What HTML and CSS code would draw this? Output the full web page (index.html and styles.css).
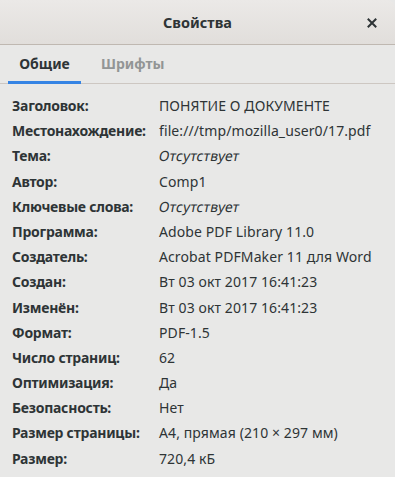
FILE: index.html
```html
<!DOCTYPE html>
<html lang="ru">
<head>
<meta charset="utf-8">
<title>Свойства</title>
<link rel="stylesheet" href="styles.css">
</head>
<body>
<div class="window">
  <header class="titlebar">
    <div class="title">Свойства</div>
    <button class="close" aria-label="Закрыть">
      <svg width="10" height="10" viewBox="0 0 10 10"><path d="M1.5 1.5 L8.5 8.5 M8.5 1.5 L1.5 8.5" stroke="#2e3436" stroke-width="2" stroke-linecap="square"/></svg>
    </button>
  </header>
  <nav class="tabs">
    <div class="tab active">Общие</div>
    <div class="tab">Шрифты</div>
  </nav>
  <dl class="props">
    <dt>Заголовок:</dt><dd>ПОНЯТИЕ О ДОКУМЕНТЕ</dd>
    <dt>Местонахождение:</dt><dd>file:///tmp/mozilla_user0/17.pdf</dd>
    <dt>Тема:</dt><dd><span class="none">Отсутствует</span></dd>
    <dt>Автор:</dt><dd>Comp1</dd>
    <dt>Ключевые слова:</dt><dd><span class="none">Отсутствует</span></dd>
    <dt>Программа:</dt><dd>Adobe PDF Library 11.0</dd>
    <dt>Создатель:</dt><dd>Acrobat PDFMaker 11 для Word</dd>
    <dt>Создан:</dt><dd>Вт 03 окт 2017 16:41:23</dd>
    <dt>Изменён:</dt><dd>Вт 03 окт 2017 16:41:23</dd>
    <dt>Формат:</dt><dd>PDF-1.5</dd>
    <dt>Число страниц:</dt><dd>62</dd>
    <dt>Оптимизация:</dt><dd>Да</dd>
    <dt>Безопасность:</dt><dd>Нет</dd>
    <dt>Размер страницы:</dt><dd>A4, прямая (210 × 297 мм)</dd>
    <dt>Размер:</dt><dd>720,4 кБ</dd>
  </dl>
</div>
</body>
</html>
```
FILE: styles.css
```css
html, body {
  margin: 0;
  padding: 0;
  background: #e8e8e7;
}
body {
  font-family: "Noto Sans", "Open Sans", sans-serif;
  font-size: 14px;
  color: #2e3436;
}
.window {
  width: 395px;
  height: 477px;
  background: #e8e8e7;
  border-top-right-radius: 8px;
  overflow: hidden;
}
.titlebar {
  height: 45px;
  box-sizing: border-box;
  border-bottom: 1px solid #bfb8b1;
  background: linear-gradient(to bottom, #ebe9e7, #e1dedb);
  display: flex;
  align-items: center;
  justify-content: center;
  position: relative;
}
.title {
  font-weight: bold;
  font-size: 14.5px;
}
.close {
  position: absolute;
  right: 17px;
  top: 17px;
  width: 12px;
  height: 12px;
  padding: 0;
  border: 0;
  background: none;
  display: flex;
  align-items: center;
  justify-content: center;
}
.tabs {
  height: 39px;
  box-sizing: border-box;
  border-bottom: 1px solid #cdc7c2;
  display: flex;
  padding-left: 8px;
}
.tab {
  padding: 0 12px;
  display: flex;
  align-items: center;
  font-weight: bold;
  color: #929595;
  border-bottom: 3px solid transparent;
  margin-bottom: -1px;
  padding-top: 1px;
}
.tab + .tab {
  margin-left: 8px;
}
.tab.active {
  color: #2e3436;
  border-bottom-color: #3584e4;
  width: 49px;
  justify-content: center;
}
.props {
  margin: 0;
  padding: 9px 12px 0;
  display: grid;
  grid-template-columns: 147px 1fr;
  grid-auto-rows: 25.2px;
}
.props dt {
  font-weight: bold;
  line-height: 25.2px;
  letter-spacing: -0.25px;
}
.props dd {
  margin: 0;
  line-height: 25.2px;
  letter-spacing: 0.1px;
}
.props .none {
  display: inline-block;
  transform: skewX(-11deg);
}
```
